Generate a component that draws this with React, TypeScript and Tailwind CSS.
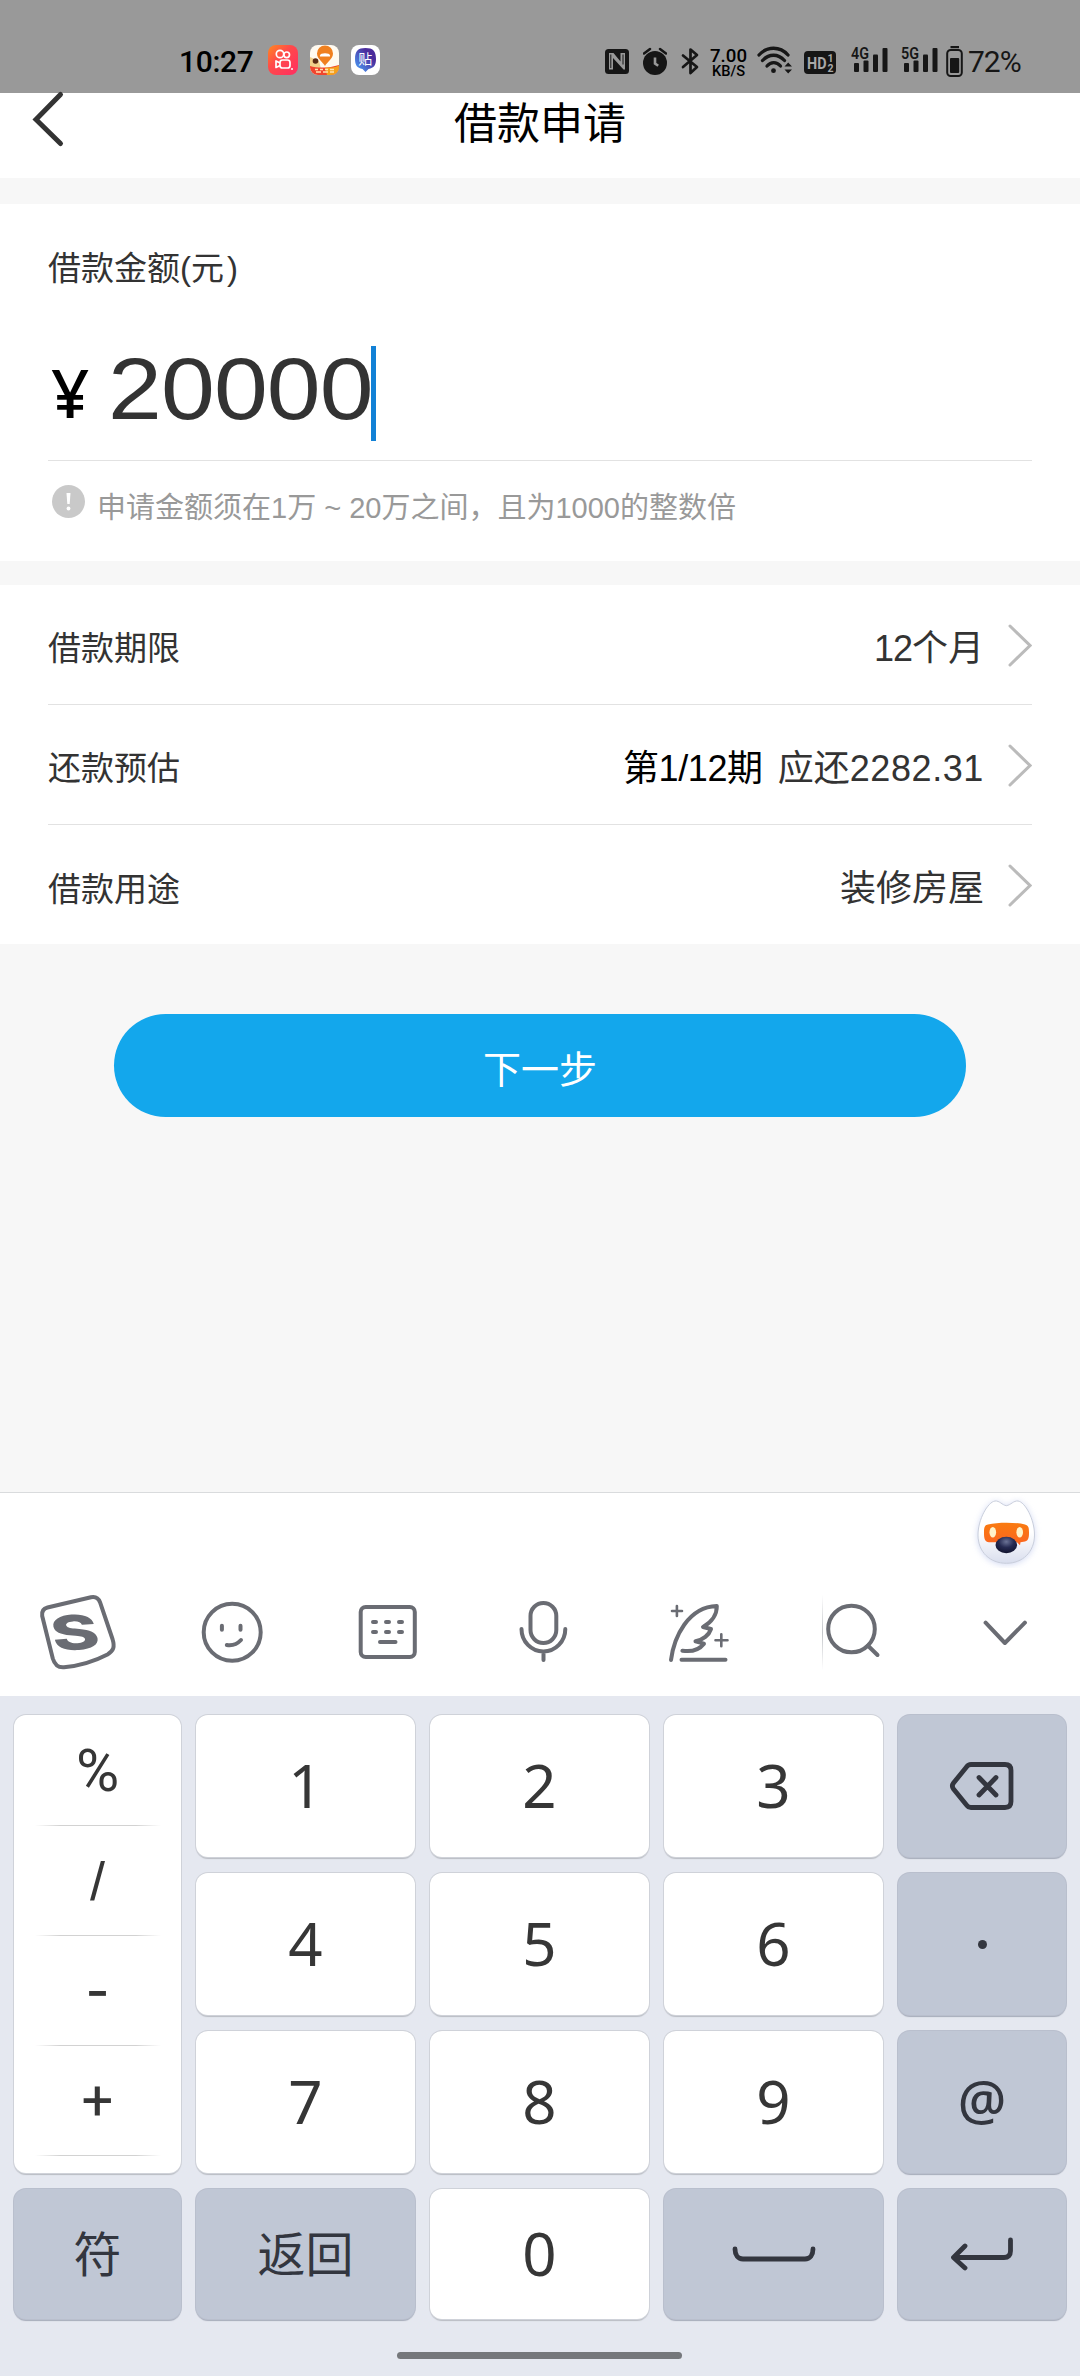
import type { ReactNode } from 'react'

const AppIcons = () => (
  <div className="ml-4 flex gap-[12px]">
    <svg width="30" height="30" viewBox="0 0 30 30" fill="none">
      <defs>
        <linearGradient id="ks" x1="0" y1="0" x2="1" y2="1">
          <stop offset="0" stopColor="#ff8a1e" />
          <stop offset="0.4" stopColor="#ff4a4a" />
          <stop offset="1" stopColor="#ff2d62" />
        </linearGradient>
      </defs>
      <rect width="30" height="30" rx="8" fill="url(#ks)" />
      <g stroke="#fff" strokeWidth="1.7">
        <circle cx="12" cy="9" r="3.7" />
        <circle cx="18.7" cy="9.8" r="2.8" />
        <rect x="12" y="15" width="10" height="8" rx="2.5" />
        <path d="M12 18l-4-2v6.500l4-2" strokeLinejoin="round" />
      </g>
      <circle cx="24" cy="24" r="1" fill="#fff" />
    </svg>
    <svg width="29" height="30" viewBox="0 0 29 30" fill="none">
      <defs>
        <clipPath id="mapClip">
          <rect width="29" height="30" rx="8" />
        </clipPath>
      </defs>
      <g clipPath="url(#mapClip)">
        <rect width="29" height="30" fill="#fffaf0" />
        <path d="M0 12l9 4 2 8H0z" fill="#f2d08a" />
        <path d="M0 21c8 2.500 20 2 29-1v10H0z" fill="#f0442e" />
        <path d="M15 22.500c8 .5 11-.5 14-2V30H17z" fill="#f5a21c" />
        <path d="M15 21c-2-4-8-7-8-12.500a8 8 0 0 1 16 0C23 14 17 17 15 21z" fill="#f0801f" />
        <path d="M10 10.500c0-3 10-3 10 0v1H10z" fill="#fff" />
        <circle cx="5.500" cy="16" r="2.800" fill="#5a2b14" />
        <path d="M5 24.500h3m2 0h3m2 0h3m2 0h4M6 27h5m2 0h5m2 0h4" stroke="#ffe2b0" strokeWidth="1.500" />
      </g>
    </svg>
    <svg width="29" height="30" viewBox="0 0 29 30">
      <defs>
        <linearGradient id="tie" x1="1" y1="0" x2="0" y2="1">
          <stop offset="0.3" stopColor="#4b2c9c" />
          <stop offset="1" stopColor="#4aa8ff" />
        </linearGradient>
      </defs>
      <rect width="29" height="30" rx="8" fill="#fff" />
      <path d="M14.500 27l-3-3C6 23 4 20 4 14 4 6 7 3 14.500 3S25 6 25 14c0 6-2 9-7.500 10z" fill="url(#tie)" />
      <text x="14.300" y="19" fontSize="14" textAnchor="middle" fill="#fff" fontFamily="'Noto Sans CJK SC', sans-serif">
        贴
      </text>
    </svg>
  </div>
)

const Signal = ({ label }: { label: string }) => (
  <svg width="37" height="32" viewBox="0 0 37 32" fill="#161616">
    <text x="0" y="13.500" fontSize="16.500" fontWeight="600" textLength="18" lengthAdjust="spacingAndGlyphs" fontFamily="Roboto, sans-serif">
      {label}
    </text>
    <rect x="3" y="18" width="5" height="9" rx="1" />
    <rect x="12.500" y="15.500" width="5" height="11.500" rx="1" />
    <rect x="22" y="9.500" width="5" height="17.500" rx="1" />
    <rect x="31.500" y="3" width="5" height="24" rx="1" />
  </svg>
)

const StatusBar = () => (
  <div className="flex h-[93px] items-start bg-[#999999] pt-[45px] pl-[179px] font-['Roboto'] text-black">
    <span className="mt-px w-[73px] text-[30px] leading-[32px] font-medium tracking-[-0.3px]">10:27</span>
    <AppIcons />
    <div className="ml-[225px] flex items-start">
      <svg width="24" height="32" viewBox="0 0 24 32" fill="none">
        <rect y="4" width="24" height="25" rx="3.500" fill="#161616" />
        <path d="M4 8h4.500l7 8.500V8H20v16.500h-1.500L8 13v11.500H4z" fill="#999999" />
        <path d="M5.800 9.500v13.500M18 9.500v10" stroke="#161616" strokeWidth="1" />
      </svg>
      <svg className="ml-[14px]" width="24" height="32" viewBox="0 0 24 32" fill="none">
        <circle cx="12" cy="18" r="12" fill="#161616" />
        <path d="M1 8.500L7 4M23 8.500L17 4" stroke="#161616" strokeWidth="2.500" strokeLinecap="round" />
        <path d="M12 12.500v6l3.200 2.300" stroke="#999999" strokeWidth="2.600" />
      </svg>
      <svg className="ml-[14px]" width="18" height="32" viewBox="0 0 18 32" fill="none">
        <path d="M2 10.500l14 11.500-6.500 6V4.500L16 10 2 22" stroke="#161616" strokeWidth="2.700" strokeLinecap="round" strokeLinejoin="round" />
      </svg>
      <svg className="ml-[9px]" width="40" height="34" viewBox="0 0 40 34" fontFamily="Roboto, sans-serif" fontWeight="500">
        <text x="2" y="16.500" fontSize="19" textLength="37" lengthAdjust="spacingAndGlyphs">
          7.00
        </text>
        <text x="4" y="31" fontSize="15" textLength="33" lengthAdjust="spacingAndGlyphs">
          KB/S
        </text>
      </svg>
      <svg className="ml-[9px]" width="36" height="32" viewBox="0 0 36 32" fill="none" stroke="#161616" strokeWidth="3.300" strokeLinecap="round">
        <path d="M2 10C10 1 23 1 31 10" />
        <path d="M5.500 15.500C12 8.500 21 8.500 27.500 15.500" />
        <path d="M10 21c4-4.500 9.500-4.500 13.500 0" />
        <circle cx="16.500" cy="25.700" r="2.400" fill="#161616" stroke="none" />
        <path d="M27.500 21.500h7.500L31.200 17.500zM27.500 24.500h7.500L31.200 28.500z" fill="#161616" stroke="none" />
      </svg>
      <svg className="ml-[11px]" width="32" height="32" viewBox="0 0 32 32" fontFamily="Roboto, sans-serif" fontWeight="700">
        <rect y="6" width="32" height="23" rx="4" fill="#161616" />
        <text x="3" y="23.500" fontSize="17" textLength="19.500" lengthAdjust="spacingAndGlyphs" fill="#a8a8a8">
          HD
        </text>
        <text x="23.500" y="17" fontSize="10.500" fill="#a8a8a8">1</text>
        <text x="23.500" y="26.500" fontSize="10.500" fill="#a8a8a8">2</text>
      </svg>
      <div className="ml-[15px] flex gap-[13px]">
        <Signal label="4G" />
        <Signal label="5G" />
      </div>
      <svg className="ml-[8px]" width="17" height="32" viewBox="0 0 17 32" fill="none">
        <rect x="4.500" y="1" width="8.500" height="2.200" fill="#161616" />
        <rect x="1.200" y="5" width="14.600" height="26" rx="3.500" stroke="#161616" strokeWidth="2" />
        <rect x="4" y="13" width="9.200" height="15" rx="1" fill="#161616" />
      </svg>
      <span className="mt-px ml-[5px] text-[30px] leading-[32px] tracking-[-1px] text-[#161616]">72%</span>
    </div>
  </div>
)

const Header = () => (
  <header className="relative flex h-[85px] justify-center bg-white pt-[6px]">
    <svg className="absolute top-[-3px] left-[30px]" width="36" height="60" viewBox="0 0 36 60" fill="none" stroke="#333" strokeWidth="5" strokeLinecap="round">
      <path d="M30.500 4.500L6 29.500l24.500 24" />
    </svg>
    <h1 className="text-[43px] leading-[50px] text-black">借款申请</h1>
  </header>
)

const AmountCard = () => (
  <section className="h-[357px] bg-white px-[48px] pt-[41px]">
    <div className="text-[33px] leading-[48px] text-[#333]">
      借款金额(元<span className="ml-[3px]">)</span>
    </div>
    <div className="flex h-[168px] items-start border-b border-[#e2e2e2] pt-[53px]">
      <span className="mt-[10px] w-[60px] pl-[3px] font-['Noto_Sans'] text-[67px] leading-[72px] font-medium text-black">
        ¥
      </span>
      <span className="mt-[-5px] w-[263px] origin-left scale-x-110 text-[88px] leading-[96px] text-[#333]">
        <span className="block w-[237px] tracking-[-0.8px]">20000</span>
      </span>
      <span className="h-[95px] w-[5px] bg-[#1281d6]" />
    </div>
    <div className="flex pt-[24px] text-[29px] leading-[42px] text-[#999]">
      <svg className="mr-[12px] ml-[4px]" width="33" height="33" viewBox="0 0 33 33" fill="#fff">
        <circle cx="16.500" cy="16.500" r="16.500" fill="#c9c9c9" />
        <path d="M14.500 8h4l-.8 11h-2.400z" />
        <circle cx="16.500" cy="23.500" r="1.900" />
      </svg>
      <span className="pt-[2px]">申请金额须在1万 ~ 20万之间，且为1000的整数倍</span>
    </div>
  </section>
)

const Row = ({ label, children }: { label: string; children: ReactNode }) => (
  <div className="flex h-[120px] items-center border-b border-[#e2e2e2] last:border-0">
    <span className="mt-[9px] text-[33px] text-[#333]">{label}</span>
    <span className="mt-[8px] ml-auto text-[36px] text-[#333]">{children}</span>
    <svg className="ml-[23px]" width="25" height="44" viewBox="0 0 25 44" fill="none" stroke="#bbb" strokeWidth="3" strokeLinecap="round">
      <path d="M3 3l20 19.500L3 42" />
    </svg>
  </div>
)

const ToolCell = ({ children }: { children: ReactNode }) => (
  <div className="flex w-[155px] shrink-0 items-center justify-center last:w-[150px]">
    <svg width="80" height="80" viewBox="0 0 80 80" fill="none" stroke="#6a6c73" strokeWidth="4" strokeLinecap="round" strokeLinejoin="round">
      {children}
    </svg>
  </div>
)

const Toolbar = () => (
  <div className="h-[204px] border-t border-[#d9dbdd] bg-white">
    <div className="flex h-[75px] justify-end pr-[37px]">
      <svg width="72" height="75" viewBox="0 0 72 75">
        <defs>
          <linearGradient id="head" x1="0" y1="0" x2="0" y2="1">
            <stop offset="0.5" stopColor="#fff" />
            <stop offset="1" stopColor="#d9deee" />
          </linearGradient>
          <linearGradient id="mask" x1="0" y1="0" x2="0" y2="1">
            <stop offset="0" stopColor="#f97b10" />
            <stop offset="1" stopColor="#fb6420" />
          </linearGradient>
          <radialGradient id="nose" cx="0.5" cy="0.3" r="0.7">
            <stop offset="0" stopColor="#6b7396" />
            <stop offset="0.5" stopColor="#262b52" />
            <stop offset="1" stopColor="#12142f" />
          </radialGradient>
        </defs>
        <path
          d="M35.300 12.700C31 12 28.500 7.500 24 8 17 9 7 26 7 42c0 17 12 28.300 28.300 28.300S63.500 59 63.500 42c0-16-9.500-33-16.500-34-4.500-.5-7 4-11.700 4.700z"
          fill="url(#head)"
          stroke="#c9cedb"
          className="drop-shadow-[0_1px_3px_rgba(130,150,220,0.35)]"
        />
        <path d="M17 31.500c10-2.500 27-2.500 37 0 3.500 1 4 3 4 8s-.5 8-4 9l-4.500.8-.5 3-3-3H18c-4-.5-5-3-5-9s.5-8 4-8.800z" fill="url(#mask)" />
        <ellipse cx="21.800" cy="39.300" rx="3.300" ry="5.200" fill="#fff3c9" />
        <ellipse cx="48.700" cy="39.300" rx="3.300" ry="5.200" fill="#fff3c9" />
        <ellipse cx="35.300" cy="52" rx="10.800" ry="8.200" fill="url(#nose)" />
      </svg>
    </div>
    <div className="flex h-[128px]">
      <ToolCell>
        <path d="M4.200 24C3.500 19 5.500 16.500 9.500 15.500L53 5.200c5-1 7.500 1 9 5L74.500 47c2.500 8 1 12-5 15.500C57 69 40 74 26 75.300c-6.500.5-9.500-3-11.200-8.800z" />
        <text transform="translate(40.500 57.500) rotate(-4) skewX(8) scale(1.500 1)" textAnchor="middle" fontSize="48" fontWeight="800" fontFamily="Inter, sans-serif" fill="#6a6c73" stroke="none">
          S
        </text>
      </ToolCell>
      <ToolCell>
        <circle cx="39.200" cy="40.300" r="28.500" />
        <path d="M28.900 33.700v4M47.500 33.700v4M33.800 53c6 1 10-.5 14.200-5" />
      </ToolCell>
      <ToolCell>
        <rect x="12.700" y="15" width="54.100" height="50" rx="5" />
        <path d="M25 30h3M38 30h3M51 30h3M25 40h3M38 40h3M51 40h3M32 50h15.500" />
      </ToolCell>
      <ToolCell>
        <rect x="27.500" y="11" width="25.800" height="40" rx="12.900" />
        <path d="M18.500 37a21.900 22.500 0 0 0 43.800 0M40.500 59.500V68" />
      </ToolCell>
      <ToolCell>
        <path d="M13 68C16 45 30 15 58.800 14 59 22 54 30 45 35l8 2C51 43 45 48 37.500 49.300l8.500 2.400C41 58 33 60 24.400 58.700M23.500 67.700h44" />
        <path d="M14 19h10M18.900 14v10M57.500 48.300h12M63.300 42.300v12" strokeWidth="2.600" />
      </ToolCell>
      <ToolCell>
        <defs>
          <linearGradient id="sep" x1="0" y1="0" x2="0" y2="1">
            <stop offset="0" stopColor="#fff" />
            <stop offset="0.500" stopColor="#c4c6ca" />
            <stop offset="1" stopColor="#fff" />
          </linearGradient>
        </defs>
        <rect x="9" y="3" width="1" height="75" fill="url(#sep)" stroke="none" />
        <circle cx="38.500" cy="37" r="23.300" />
        <path d="M55 53.700l9.500 9.300" />
      </ToolCell>
      <ToolCell>
        <path d="M20.600 30.700L39.900 51l20-20.300" />
      </ToolCell>
    </div>
  </div>
)

const Key = ({ dark, children }: { dark?: boolean; children: ReactNode }) => (
  <div
    className={
      dark
        ? 'flex items-center justify-center rounded-[12px] bg-[#c0c7d5] font-["Noto_Sans","Noto_Sans_CJK_SC",sans-serif] text-[48px] text-[#33363f] shadow-[0_0_0_1px_#b9bfcd,0_2px_1px_#a6acba]'
        : 'flex items-center justify-center rounded-[12px] bg-white pb-[3px] font-["Noto_Sans"] text-[60px] leading-none text-[#363636] shadow-[0_0_0_1px_#cfd2d9,0_2px_1px_#b9bcc3]'
    }
  >
    {children}
  </div>
)

const symbols = [
  { char: '%', className: 'text-[59px]' },
  { char: '/', className: "font-['Liberation_Sans'] text-[54px]" },
  { char: '-', className: "font-['Inter'] text-[52px] font-medium" },
  { char: '+', className: 'text-[56px]' },
]

const Keypad = () => (
  <div className="h-[680px] bg-[#e5e8f0] pt-[19px] pl-[14px]">
    <div className="grid grid-cols-[167px_219px_219px_219px_168px] grid-rows-[142px_142px_142px_130px] gap-x-[15px] gap-y-[16px]">
      <div className="row-span-3 rounded-[12px] bg-white font-['Roboto'] text-[#363636] shadow-[0_0_0_1px_#cfd2d9,0_2px_1px_#b9bcc3]">
        {symbols.map(({ char, className }) => (
          <div key={char} className="flex h-[110px] flex-col items-center first:h-[111px]">
            <span className={`flex flex-1 items-center leading-none ${className}`}>{char}</span>
            <span className="h-px w-[126px] bg-[linear-gradient(to_right,transparent,#d2d2d2_20%,#d2d2d2_80%,transparent)]" />
          </div>
        ))}
      </div>
      <Key>1</Key>
      <Key>2</Key>
      <Key>3</Key>
      <Key dark>
        <svg width="66" height="50" viewBox="0 0 66 50" fill="none" stroke="#33363f" strokeWidth="4.800" strokeLinecap="round" strokeLinejoin="round">
          <path d="M22 3.500h34c4 0 6 2 6 6v31c0 4-2 6-6 6H22c-2 0-3.500-1-4.500-2.500L4.500 28c-1.500-2-1.500-4 0-6l13-16c1-1.500 2.500-2.500 4.500-2.500z" />
          <path d="M30 16.500L47 34M47 16.500L30 34" />
        </svg>
      </Key>
      <Key>4</Key>
      <Key>5</Key>
      <Key>6</Key>
      <Key dark>
        <span className="size-[9px] rounded-full bg-[#33363f]" />
      </Key>
      <Key>7</Key>
      <Key>8</Key>
      <Key>9</Key>
      <Key dark>
        <span className="pb-[6px] text-[54px] leading-none font-medium">@</span>
      </Key>
      <Key dark>符</Key>
      <Key dark>返回</Key>
      <Key>0</Key>
      <Key dark>
        <svg width="84" height="16" viewBox="0 0 84 16" fill="none" stroke="#33363f" strokeWidth="4.800" strokeLinecap="round">
          <path d="M3 3c0 6 3 10 8 10h62c5 0 8-4 8-10" />
        </svg>
      </Key>
      <Key dark>
        <svg width="64" height="34" viewBox="0 0 64 34" fill="none" stroke="#33363f" strokeWidth="4.800" strokeLinecap="round" strokeLinejoin="round">
          <path d="M60.500 3v11c0 4-2 6.500-6.500 6.500H5M15 9L3.500 20.500 15 31" />
        </svg>
      </Key>
    </div>
    <div className="mt-[33px] ml-[383px] h-[7px] w-[285px] rounded-full bg-[#75777b]" />
  </div>
)

export default function App() {
  return (
    <div className="flex h-[2376px] w-[1080px] flex-col bg-[#f7f7f7] font-['Liberation_Sans','Noto_Sans_CJK_SC',sans-serif]">
      <StatusBar />
      <Header />
      <div className="h-[26px]" />
      <AmountCard />
      <section className="mt-[24px] h-[359px] bg-white px-[48px]">
        <Row label="借款期限">
          <span className="tracking-[-1px]">12</span>个月
        </Row>
        <Row label="还款预估">
          <span className="mr-[15px] tracking-[-0.4px] text-black">第1/12期</span>
          应还<span className="tracking-[0.6px]">2282.31</span>
        </Row>
        <Row label="借款用途">装修房屋</Row>
      </section>
      <button className="mx-auto mt-[70px] h-[103px] w-[852px] rounded-full bg-[#13a7ec] pt-[9px] text-[38px] text-white">
        下一步
      </button>
      <div className="mt-auto">
        <Toolbar />
        <Keypad />
      </div>
    </div>
  )
}
